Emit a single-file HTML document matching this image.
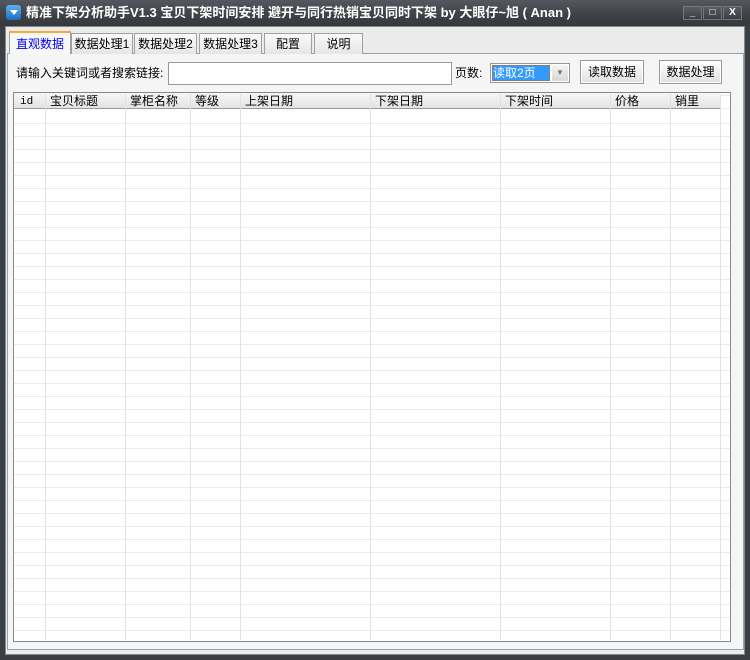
<!DOCTYPE html><html><head><meta charset="utf-8"><style>
*{margin:0;padding:0;box-sizing:border-box}
body{width:750px;height:660px;background:#3b3e43;position:relative;overflow:hidden;font-family:"Liberation Sans","Noto Sans CJK SC",sans-serif;font-size:12px;line-height:14px;color:#000}
.a{position:absolute}
.title{left:0;top:0;width:750px;height:26px;background:linear-gradient(#55585e,#3e4146 60%,#35383c)}
.tt{left:26px;top:5px;color:#fff;font-weight:bold;font-size:13px;line-height:16px;white-space:nowrap}
.ico{left:6px;top:5px;width:15px;height:15px;border-radius:3px;background:linear-gradient(#5fb0f0,#1f6fc0)}
.wb{top:6px;width:19px;height:14px;border:1px solid #777;background:linear-gradient(#5a5d62,#3a3d42);color:#fff;font-size:10px;text-align:center;line-height:12px;font-weight:bold}
.client{left:5px;top:26px;width:740px;height:629px;background:#ebebeb;border:1px solid #888}
.tab{top:33px;height:21px;border:1px solid #a0a0a0;border-bottom:none;background:linear-gradient(#fafafa,#e6e6e6);text-align:center;line-height:20px;font-size:12px}
.panel{left:7px;top:53px;width:737px;height:597px;border:1px solid #8fa3b5;background:#f5f5f5}
.grid{left:13px;top:92px;width:718px;height:550px;border:1px solid #888;background:#fff}
.hdr{left:14px;top:93px;width:706px;height:16px;background:linear-gradient(#f6f6f6,#e3e3e3);border-bottom:1px solid #999}
.hl{top:94px;font-size:12px;line-height:14px}
.vl{top:94px;width:1px;height:546px;background:#e2e2e2}
.btn{top:60px;height:24px;border:1px solid #999;background:linear-gradient(#fff,#e0e0e0);text-align:center;line-height:22px;box-shadow:inset 0 0 0 1px #fff}
</style></head><body>
<div class="a title"></div>
<div class="a ico"><div style="margin:5px 0 0 4px;width:0;height:0;border-left:4px solid transparent;border-right:4px solid transparent;border-top:5px solid #fff"></div></div>
<div class="a tt">精准下架分析助手V1.3 宝贝下架时间安排 避开与同行热销宝贝同时下架 by 大眼仔~旭 ( Anan )</div>
<div class="a wb" style="left:683px">_</div>
<div class="a wb" style="left:703px">□</div>
<div class="a wb" style="left:723px">X</div>
<div class="a client"></div>
<div class="a panel"></div>
<div class="a tab" style="left:9px;width:62px;top:31px;height:23px;background:#f7f7f7;border-top:2px solid #f0b030;color:#0000ee;line-height:22px;z-index:2">直观数据</div>
<div class="a tab" style="left:71px;width:62px">数据处理1</div>
<div class="a tab" style="left:134px;width:63px">数据处理2</div>
<div class="a tab" style="left:199px;width:63px">数据处理3</div>
<div class="a tab" style="left:264px;width:48px">配置</div>
<div class="a tab" style="left:314px;width:49px">说明</div>
<div class="a" style="left:16px;top:66px">请输入关键词或者搜索链接:</div>
<div class="a" style="left:168px;top:62px;width:284px;height:23px;border:1px solid #999;background:#fff"></div>
<div class="a" style="left:455px;top:66px">页数:</div>
<div class="a" style="left:490px;top:63px;width:80px;height:20px;border:1px solid #999;background:#fff"></div>
<div class="a" style="left:492px;top:65px;width:58px;height:16px;background:#3399ff;color:#fff;border:1px dotted #c60;line-height:14px">读取2页</div>
<div class="a" style="left:552px;top:65px;width:16px;height:16px;background:linear-gradient(#f4f4f4,#d8d8d8);color:#777;font-size:8px;text-align:center;line-height:16px">▼</div>
<div class="a btn" style="left:580px;width:64px">读取数据</div>
<div class="a btn" style="left:659px;width:63px">数据处理</div>
<div class="a grid" style="background:#fff repeating-linear-gradient(to bottom,transparent 0,transparent 12px,#ebebeb 12px,#ebebeb 13px);background-position:0 18px"></div>
<div class="a hdr"></div>
<div class="a hl" style="left:20px;top:95px;font-family:'Liberation Mono',monospace;font-size:11px">id</div>
<div class="a hl" style="left:50px">宝贝标题</div>
<div class="a hl" style="left:130px">掌柜名称</div>
<div class="a hl" style="left:195px">等级</div>
<div class="a hl" style="left:245px">上架日期</div>
<div class="a hl" style="left:375px">下架日期</div>
<div class="a hl" style="left:505px">下架时间</div>
<div class="a hl" style="left:615px">价格</div>
<div class="a hl" style="left:675px">销里</div>
<div class="a vl" style="left:45px"></div>
<div class="a vl" style="left:125px"></div>
<div class="a vl" style="left:190px"></div>
<div class="a vl" style="left:240px"></div>
<div class="a vl" style="left:370px"></div>
<div class="a vl" style="left:500px"></div>
<div class="a vl" style="left:610px"></div>
<div class="a vl" style="left:670px"></div>
<div class="a vl" style="left:720px"></div>
</body></html>
